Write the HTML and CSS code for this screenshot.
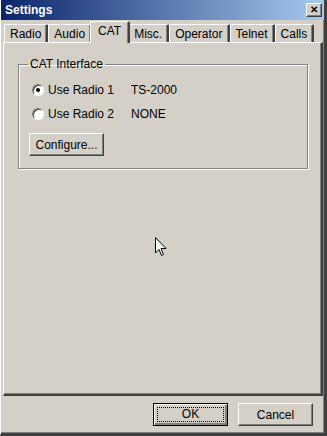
FILE: index.html
```html
<!DOCTYPE html>
<html lang="en">
<head>
  <meta charset="UTF-8" />
  <title>Settings</title>
  <link rel="stylesheet" href="styles.css">
</head>
<body>
  <div class="window">
    <div class="titlebar">
      <span class="title">Settings</span>
      <span class="close">&#x2715;</span>
    </div>

    <div class="tabs">
      <div class="tab">Radio</div>
      <div class="tab">Audio</div>
      <div class="tab active">CAT</div>
      <div class="tab">Misc.</div>
      <div class="tab">Operator</div>
      <div class="tab">Telnet</div>
      <div class="tab">Calls</div>
    </div>

    <div class="panel">
      <fieldset class="group">
        <legend>CAT Interface</legend>
        <div class="row">
          <span class="radio checked"></span>
          <span class="label">Use Radio 1</span>
          <span class="value">TS-2000</span>
        </div>
        <div class="row">
          <span class="radio"></span>
          <span class="label">Use Radio 2</span>
          <span class="value">NONE</span>
        </div>
        <button class="btn configure">Configure...</button>
      </fieldset>
    </div>

    <div class="footer">
      <button class="btn default"><span class="focus">OK</span></button>
      <button class="btn">Cancel</button>
    </div>

    <svg class="cursor" width="12" height="20" viewBox="0 0 12 20">
      <path d="M0.5 0.5 L0.5 16 L4 12.5 L6.5 18.5 L8.5 17.5 L6 11.5 L11 11.5 Z" fill="#fff" stroke="#000" stroke-width="1"/>
    </svg>
  </div>
</body>
</html>
```

FILE: styles.css
```css
* {
  box-sizing: border-box;
}
body {
  margin: 0;
  background: #d4d0c8;
  font-family: 'Liberation Sans', Arial, sans-serif;
  font-size: 12px;
  color: #000;
}
.window {
  position: relative;
  width: 327px;
  height: 436px;
  background: #d4d0c8;
  border-left: 1px solid #fff;
  border-right: 3px solid #404040;
  border-bottom: 3px solid #404040;
  box-shadow: inset -1px -1px 0 #808080;
}
.titlebar {
  height: 20px;
  background: linear-gradient(90deg, #0a246a, #a6caf0);
  display: flex;
  align-items: center;
  justify-content: space-between;
  padding: 0 2px 0 4px;
}
.title {
  color: #fff;
  font-weight: bold;
  font-size: 12px;
}
.close {
  width: 16px;
  height: 14px;
  background: #d4d0c8;
  border: 1px solid;
  border-color: #fff #404040 #404040 #fff;
  box-shadow: inset -1px -1px 0 #808080;
  font-size: 10px;
  font-weight: bold;
  line-height: 12px;
  text-align: center;
}
.tabs {
  display: flex;
  align-items: flex-end;
  margin-top: 2px;
  padding-left: 3px;
  height: 20px;
}
.tab {
  height: 18px;
  line-height: 19px;
  padding: 0 5px;
  border-top: 1px solid #fff;
  border-left: 1px solid #fff;
  border-right: 2px solid #404040;
  box-shadow: inset -1px 0 0 #808080;
  border-radius: 2px 2px 0 0;
}
.tab.active {
  height: 22px;
  line-height: 18px;
  margin: 0 -2px -1px -2px;
  padding: 0 7px;
  background: #d4d0c8;
  position: relative;
  z-index: 1;
}
.panel {
  margin: 0 0 0 2px;
  width: 320px;
  height: 354px;
  border-top: 1px solid #fff;
  border-left: 1px solid #fff;
  border-right: 2px solid #404040;
  border-bottom: 2px solid #404040;
  box-shadow: inset -1px -1px 0 #808080;
  padding: 14px 0 0 14px;
}
.group {
  width: 290px;
  height: 112px;
  margin: 0;
  padding: 7px 0 0 13px;
  border: 1px solid #808080;
  box-shadow: 1px 1px 0 #fff, inset 1px 1px 0 #fff;
}
.group legend {
  padding: 0 2px;
  margin-left: -4px;
}
.row {
  display: flex;
  align-items: center;
  height: 24px;
}
.radio {
  width: 12px;
  height: 12px;
  border-radius: 50%;
  background: #fff;
  border: 1px solid;
  border-color: #808080 #fff #fff #808080;
  box-shadow: inset 1px 1px 0 #404040;
  display: flex;
  align-items: center;
  justify-content: center;
}
.radio.checked::after {
  content: "";
  width: 4px;
  height: 4px;
  border-radius: 50%;
  background: #000;
}
.label {
  margin-left: 4px;
  width: 83px;
}
.btn {
  background: #d4d0c8;
  font-family: 'Liberation Sans', Arial, sans-serif;
  font-size: 12px;
  color: #000;
  border: 1px solid;
  border-color: #fff #404040 #404040 #fff;
  box-shadow: inset -1px -1px 0 #808080;
  padding: 0;
}
.configure {
  display: block;
  width: 75px;
  height: 23px;
  margin-top: 7px;
  margin-left: -3px;
}
.footer {
  display: flex;
  justify-content: flex-end;
  gap: 10px;
  padding: 7px 11px 0 0;
}
.footer .btn {
  width: 75px;
  height: 23px;
}
.footer .default {
  border: 1px solid #000;
  box-shadow: inset 1px 1px 0 #fff, inset -2px -2px 0 #808080;
  padding: 3px;
}
.focus {
  display: block;
  height: 15px;
  line-height: 13px;
  border: 1px dotted #000;
}
.cursor {
  position: absolute;
  left: 154px;
  top: 237px;
}
```
